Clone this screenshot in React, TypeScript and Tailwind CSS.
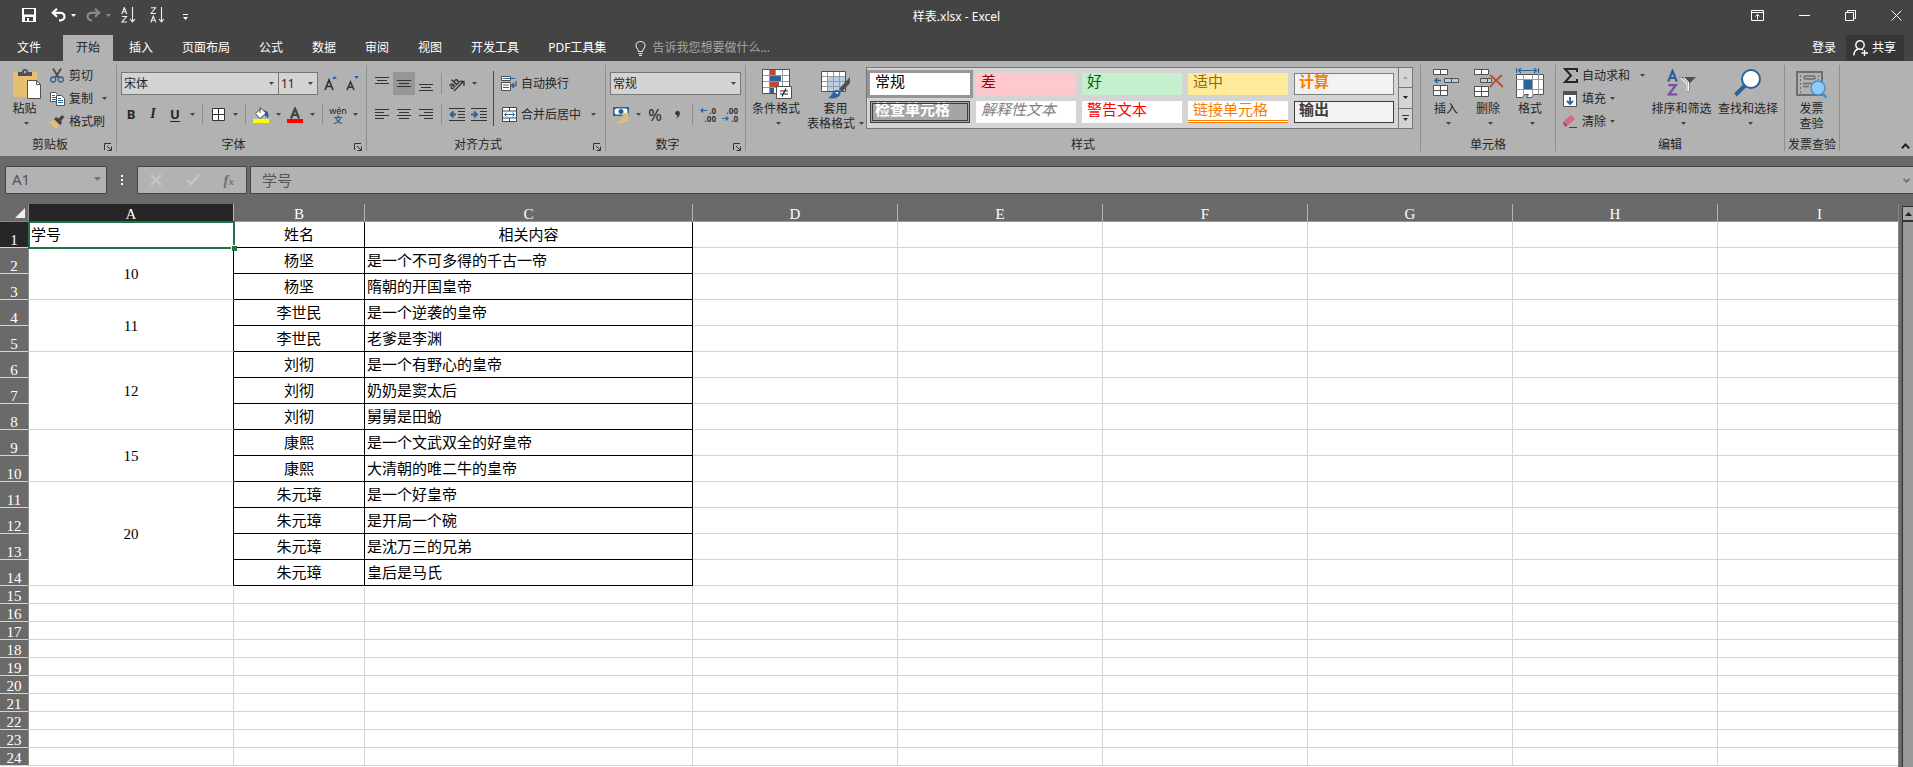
import React from 'react';

const TABS = ['开始', '插入', '页面布局', '公式', '数据', '审阅', '视图', '开发工具', 'PDF工具集'];

const COLUMNS = ['A', 'B', 'C', 'D', 'E', 'F', 'G', 'H', 'I'];

interface Emperor {
  id: number;
  entries: { name: string; note: string }[];
}

const EMPERORS: Emperor[] = [
  { id: 10, entries: [{ name: '杨坚', note: '是一个不可多得的千古一帝' }, { name: '杨坚', note: '隋朝的开国皇帝' }] },
  { id: 11, entries: [{ name: '李世民', note: '是一个逆袭的皇帝' }, { name: '李世民', note: '老爹是李渊' }] },
  {
    id: 12,
    entries: [
      { name: '刘彻', note: '是一个有野心的皇帝' },
      { name: '刘彻', note: '奶奶是窦太后' },
      { name: '刘彻', note: '舅舅是田蚡' },
    ],
  },
  { id: 15, entries: [{ name: '康熙', note: '是一个文武双全的好皇帝' }, { name: '康熙', note: '大清朝的唯二牛的皇帝' }] },
  {
    id: 20,
    entries: [
      { name: '朱元璋', note: '是一个好皇帝' },
      { name: '朱元璋', note: '是开局一个碗' },
      { name: '朱元璋', note: '是沈万三的兄弟' },
      { name: '朱元璋', note: '皇后是马氏' },
    ],
  },
];

const ROWS = EMPERORS.flatMap(e =>
  e.entries.map((entry, i) => ({ ...entry, id: e.id, span: i === 0 ? e.entries.length : 0 }))
);

const EMPTY_ROWS = Array.from({ length: 10 }, (_, i) => i + 15);

const STYLES = [
  { label: '常规', className: 'bg-white text-black outline-3 outline-[#969696]' },
  { label: '差', className: 'bg-[#ffc7ce] text-[#9c0006]' },
  { label: '好', className: 'bg-[#c6efce] text-[#006100]' },
  { label: '适中', className: 'bg-[#ffeb9c] text-[#9c6500]' },
  { label: '计算', className: 'bg-[#f2f2f2] font-bold text-[#fa7d00] outline-1 -outline-offset-1 outline-[#7f7f7f]' },
  { label: '检查单元格', className: 'bg-[#a5a5a5] font-bold text-white outline-3 -outline-offset-3 outline-double outline-[#3f3f3f]' },
  { label: '解释性文本', className: 'bg-white text-[#7f7f7f] italic' },
  { label: '警告文本', className: 'bg-white text-[#ff0000]' },
  { label: '链接单元格', className: 'bg-white text-[#fa7d00] border-b-3 border-double border-[#ff8001]' },
  { label: '输出', className: 'bg-[#f2f2f2] font-bold text-[#3f3f3f] outline-1 -outline-offset-1 outline-[#3f3f3f]' },
];

const Caret: React.FC<{ className?: string }> = ({ className = 'text-[#444]' }) => (
  <svg width="5" height="3" viewBox="0 0 5 3" className={`shrink-0 ${className}`}>
    <path d="M0 0h5L2.5 3z" fill="currentColor" />
  </svg>
);

const Tool: React.FC<{ label: string; active?: boolean; children: React.ReactNode }> = ({ label, active, children }) => (
  <button aria-label={label} className={`flex h-[23px] w-[22px] shrink-0 items-center justify-center ${active ? 'bg-[#969696]' : ''}`}>
    {children}
  </button>
);

const Drop: React.FC<{ label: string }> = ({ label }) => (
  <button aria-label={label} className="flex h-[23px] w-3 shrink-0 items-center justify-center">
    <Caret />
  </button>
);

const Divider = () => <div className="mx-1 h-[21px] w-px shrink-0 bg-[#8f8f8f]" />;

const Group: React.FC<{ title: string; launcher?: boolean; className?: string; children: React.ReactNode }> = ({
  title,
  launcher,
  className = '',
  children,
}) => (
  <>
    <section className={`flex shrink-0 flex-col ${className}`}>
      <div className="flex h-[74px]">{children}</div>
      <div className="flex h-5 items-center">
        <h2 className="flex-1 text-center whitespace-nowrap">{title}</h2>
        {launcher && (
          <button aria-label={`${title}设置`} className="flex h-5 w-4 items-center justify-center pt-1">
            <svg width="8" height="8" viewBox="0 0 8 8" fill="none" stroke="#333">
              <path d="M.5 7V.5H7M3 3l4 4M7.5 3.5v4h-4" />
            </svg>
          </button>
        )}
      </div>
    </section>
    <div className="mt-1 mb-[5px] w-px shrink-0 bg-[#8f8f8f]" />
  </>
);

const BigButton: React.FC<{ lines: string[]; className: string; drop?: 'below' | 'inline'; children: React.ReactNode }> = ({
  lines,
  className,
  drop,
  children,
}) => (
  <button className={`flex shrink-0 flex-col items-center pt-2 leading-[15px] ${className}`}>
    <span className="flex h-8 items-start">{children}</span>
    {lines.map((line, i) => (
      <span key={line} className="flex items-center gap-1 whitespace-nowrap">
        {line}
        {drop === 'inline' && i === lines.length - 1 && <Caret />}
      </span>
    ))}
    {drop === 'below' && (
      <span className="flex h-[15px] items-center pl-1">
        <Caret />
      </span>
    )}
  </button>
);

const SmallButton: React.FC<{ label: string; drop?: string; children: React.ReactNode }> = ({ label, drop, children }) => (
  <button className="flex h-[23px] items-center gap-1 whitespace-nowrap">
    <span className="flex w-4 justify-center">{children}</span>
    {label}
    {drop && <Caret className={`text-[#444] ${drop}`} />}
  </button>
);

const Lines: React.FC<{ d: string }> = ({ d }) => (
  <svg width="14" height="14" viewBox="0 0 14 14" stroke="#333" fill="none">
    <path d={d} />
  </svg>
);

const QuickAccess = () => (
  <div className="flex w-[640px] items-center pl-[22px] text-white">
    <button aria-label="保存" className="w-[29px]">
      <svg width="14" height="14" viewBox="0 0 14 14">
        <path d="M0 0h14v14H0z" fill="#fff" />
        <path d="M2 1h10v5.5H2zM3 9h8v4H7v-3H5v3H3z" fill="#444" />
      </svg>
    </button>
    <button aria-label="撤消" className="w-5">
      <svg width="15" height="14" viewBox="0 0 15 14" fill="none" stroke="#fff" strokeWidth="2.2">
        <path d="M6 .8L1.8 4.8 6 8.8M2 4.8h7.5a4 3.8 0 0 1 0 7.6H8" />
      </svg>
    </button>
    <button aria-label="撤消列表" className="w-[15px]"><Caret className="text-white" /></button>
    <button aria-label="恢复" className="w-5">
      <svg width="15" height="14" viewBox="0 0 15 14" fill="none" stroke="#8a8a8a" strokeWidth="2.2">
        <path d="M9 .8l4.2 4L9 8.8M13 4.8H5.5a4 3.8 0 0 0 0 7.6H6" />
      </svg>
    </button>
    <button aria-label="恢复列表" className="w-[15px]"><Caret className="text-[#8a8a8a]" /></button>
    <button aria-label="升序" className="w-[29px]">
      <svg width="15" height="16" viewBox="0 0 15 16" fill="none" stroke="#eee" strokeWidth="1.1">
        <path d="M.8 7L3.3.5 5.8 7M1.6 4.8H5M1 9.5h4.5L1 15h5M11.5 0v14.5M9 12l2.5 2.8L14 12" />
      </svg>
    </button>
    <button aria-label="降序" className="w-[33px]">
      <svg width="15" height="16" viewBox="0 0 15 16" fill="none" stroke="#eee" strokeWidth="1.1">
        <path d="M1 .8h4.5L1 6.5h5M.8 15.5L3.3 9l2.5 6.5M1.6 13.3H5M11.5 0v14.5M9 12l2.5 2.8L14 12" />
      </svg>
    </button>
    <button aria-label="自定义快速访问工具栏" className="pt-1">
      <svg width="5" height="6" viewBox="0 0 5 6" fill="#fff">
        <path d="M0 0h5v1H0zM0 3h5L2.5 6z" />
      </svg>
    </button>
  </div>
);

const TitleBar = () => (
  <header className="flex h-[35px] shrink-0 items-stretch justify-between pb-[5px] text-white">
    <QuickAccess />
    <h1 className="self-center pt-1">样表.xlsx - Excel</h1>
    <div className="flex w-[640px] items-center justify-end gap-[35px] pr-[11px]">
      <button aria-label="功能区显示选项">
        <svg width="13" height="11" viewBox="0 0 13 11" fill="none" stroke="#fff">
          <path d="M.5.5h12v10H.5zM.5 2.5h12M6.5 9.5V4.5M4.3 6.5l2.2-2.2 2.2 2.2" />
        </svg>
      </button>
      <button aria-label="最小化">
        <svg width="11" height="11" viewBox="0 0 11 11" stroke="#fff"><path d="M0 5.5h11" /></svg>
      </button>
      <button aria-label="还原">
        <svg width="11" height="11" viewBox="0 0 11 11" fill="none" stroke="#fff"><path d="M.5 2.5h8v8h-8zM2.5 2.5v-2h8v8h-2" /></svg>
      </button>
      <button aria-label="关闭">
        <svg width="11" height="11" viewBox="0 0 11 11" stroke="#fff"><path d="M.5.5l10 10M10.5.5l-10 10" /></svg>
      </button>
    </div>
  </header>
);

const TabStrip = () => (
  <nav className="flex h-[26px] shrink-0 items-stretch text-white">
    <button className="w-[63px] pb-px pl-[17px] text-left">文件</button>
    <div className="flex gap-[3px]">
      {TABS.map(tab => (
        <button key={tab} className={`px-[13px] pb-px whitespace-nowrap ${tab === '开始' ? 'bg-[#b2b2b2] text-[#262626]' : ''}`}>
          {tab}
        </button>
      ))}
    </div>
    <label className="ml-4 flex items-center gap-[6px]">
      <svg width="11" height="15" viewBox="0 0 11 15" fill="none" stroke="#ddd" strokeWidth="1.1">
        <path d="M3.5 10.5C3.5 8 1 7.5 1 4.8a4.5 4.3 0 0 1 9 0c0 2.7-2.5 3.2-2.5 5.7zM3.5 12.5h4M4 14.4h3" />
      </svg>
      <input className="w-40 bg-transparent outline-none placeholder:text-[#a6a6a6]" placeholder="告诉我您想要做什么..." aria-label="告诉我您想要做什么" />
    </label>
    <div className="ml-auto flex pr-[9px]">
      <button className="px-[10px] pb-px">登录</button>
      <button className="flex w-[58px] items-center gap-1 bg-[#363636] pb-px pl-[7px] whitespace-nowrap">
        <svg width="15" height="16" viewBox="0 0 15 16" fill="none" stroke="#fff" strokeWidth="1.4">
          <circle cx="7" cy="5" r="4.2" />
          <path d="M.8 15.5c.3-3.5 2-6 4.5-6.5M8.5 9l1.5 1M11.5 10v6M8.5 13H15" />
        </svg>
        共享
      </button>
    </div>
  </nav>
);

const ClipboardGroup = () => (
  <Group title="剪贴板" launcher className="w-[116px]">
    <BigButton lines={['粘贴']} drop="below" className="w-[49px]">
      <svg width="28" height="30" viewBox="0 0 28 30" className="ml-1">
        <path d="M0 3h24v25H0z" fill="#e6c070" />
        <path d="M5 7V3h4a3 3 0 0 1 6 0h4v4z" fill="#505050" />
        <circle cx="12" cy="3" r="1.2" fill="#b2b2b2" />
        <path d="M14.5 11.5h9l4 4v14h-13z" fill="#fff" stroke="#505050" />
        <path d="M23.5 11.5v4h4" fill="none" stroke="#505050" />
      </svg>
    </BigButton>
    <div className="flex flex-col pt-[3px]">
      <SmallButton label="剪切">
        <svg width="14" height="15" viewBox="0 0 14 15" fill="none">
          <path d="M3 .5l5.5 9M11 .5l-5.5 9" stroke="#505050" strokeWidth="2" />
          <circle cx="3.2" cy="11.5" r="2.5" stroke="#2b6299" strokeWidth="1.3" />
          <circle cx="10.8" cy="11.5" r="2.5" stroke="#2b6299" strokeWidth="1.3" />
        </svg>
      </SmallButton>
      <SmallButton label="复制" drop="ml-[5px]">
        <svg width="15" height="14" viewBox="0 0 15 14">
          <path d="M.5.5h5l2 2v7h-7z" fill="#fff" stroke="#505050" />
          <path d="M2 3.5h3M2 5.5h4M2 7.5h4" stroke="#2b6299" />
          <path d="M6.5 3.5h5l3 3v7h-8z" fill="#fff" stroke="#505050" />
          <path d="M8 6.5h3M8 8.5h5M8 10.5h5" stroke="#2b6299" />
        </svg>
      </SmallButton>
      <SmallButton label="格式刷">
        <svg width="16" height="14" viewBox="0 0 16 14">
          <path d="M0 7l5-2 5 5-3 4z" fill="#e6c070" />
          <path d="M5 4l2-2 2.5 1.5L13 0l2.5 2L12 6l1 2-2 2z" fill="#444" />
        </svg>
      </SmallButton>
    </div>
  </Group>
);

const SelectBox: React.FC<{ label: string; value: string; className: string }> = ({ label, value, className }) => (
  <div className={`relative h-[23px] shrink-0 border border-[#777] bg-[#d4d4d4] ${className}`}>
    <select aria-label={label} className="h-full w-full appearance-none bg-transparent pl-[2px] text-[12px] text-[#262626] outline-none">
      <option>{value}</option>
    </select>
    <span className="pointer-events-none absolute inset-y-0 right-1 flex items-center">
      <Caret />
    </span>
  </div>
);

const FontGroup = () => (
  <Group title="字体" launcher className="w-[249px]">
    <div className="flex flex-col gap-2 pt-[11px] pl-[3px]">
      <div className="flex">
        <SelectBox label="字体" value="宋体" className="ml-px w-[158px]" />
        <SelectBox label="字号" value="11" className="-ml-px w-10" />
        <Tool label="增大字号">
          <svg width="14" height="15" viewBox="0 0 14 15" className="ml-1 shrink-0">
            <path d="M1 14L5 4l4 10M2.5 10.5h5" stroke="#333" strokeWidth="1.7" fill="none" />
            <path d="M8 3l2.500-3L13 3z" fill="#2b6299" />
          </svg>
        </Tool>
        <Tool label="减小字号">
          <svg width="14" height="15" viewBox="0 0 14 15" className="ml-1 shrink-0">
            <path d="M1 14l3.5-8L8 14M2.5 11.2h4" stroke="#333" strokeWidth="1.6" fill="none" />
            <path d="M8 0h5l-2.5 3z" fill="#2b6299" />
          </svg>
        </Tool>
      </div>
      <div className="flex items-center text-[13px] leading-[14px] text-[#262626]">
        <Tool label="加粗"><b className="pb-[2px]">B</b></Tool>
        <Tool label="倾斜"><b className="pb-[2px] font-[family-name:'Liberation_Serif',serif] text-[14px] italic">I</b></Tool>
        <Tool label="下划线"><b className="pb-[2px] underline underline-offset-2">U</b></Tool>
        <Drop label="下划线类型" />
        <Divider />
        <Tool label="边框">
          <svg width="13" height="13" viewBox="0 0 13 13">
            <path d="M.5.5h12v12H.5zM6.5 0v13M0 6.5h13" fill="#fff" stroke="#333" />
          </svg>
        </Tool>
        <Drop label="边框类型" />
        <Divider />
        <Tool label="填充颜色">
          <svg width="16" height="16" viewBox="0 0 16 16">
            <path d="M11 3.5c3.500 0 5.500 2 4 8-1-2-3-3-5-4z" fill="#2b6299" />
            <path d="M2.5 6.5L8 1.5l5 4.5-6 5.5z" fill="#fff" stroke="#505050" />
            <path d="M7 6V1.5Q7 .5 8 .5" fill="none" stroke="#505050" />
            <path d="M0 12h16v4H0z" fill="#ff0" />
          </svg>
        </Tool>
        <Drop label="填充颜色列表" />
        <Tool label="字体颜色">
          <svg width="16" height="16" viewBox="0 0 16 16">
            <path d="M4 11.5L8 1.500l4 10M5.500 8h5" fill="none" stroke="#444" strokeWidth="2.2" />
            <path d="M0 12h16v4H0z" fill="#f00" />
          </svg>
        </Tool>
        <Drop label="字体颜色列表" />
        <Divider />
        <Tool label="拼音">
          <span className="flex flex-col items-center text-[9px] leading-[9px]">
            <span>wén</span>
            <span className="font-bold text-[#2b6299]">文</span>
          </span>
        </Tool>
        <Drop label="拼音选项" />
      </div>
    </div>
  </Group>
);

const AlignGroup = () => (
  <Group title="对齐方式" launcher className="w-[238px]">
    <div className="flex flex-col gap-2 pt-[11px] pl-1">
      <div className="flex items-center">
        <Tool label="顶端对齐"><Lines d="M0 .5h14M2 3.5h10M0 6.5h14" /></Tool>
        <Tool label="垂直居中" active><Lines d="M0 3.5h14M2 6.5h10M0 9.5h14" /></Tool>
        <Tool label="底端对齐"><Lines d="M0 7.5h14M2 10.5h10M0 13.5h14" /></Tool>
        <Divider />
        <Tool label="方向">
          <svg width="18" height="17" viewBox="0 0 18 17" fill="none" stroke="#333" strokeWidth="1.3" className="overflow-visible">
            <text x="0" y="12" fontSize="10" fontWeight="bold" fill="#333" stroke="none" transform="rotate(-45 6 9)">ab</text>
            <path d="M6 16l9-9M11.500 6.500H16V11" />
          </svg>
        </Tool>
        <Drop label="方向选项" />
      </div>
      <div className="flex items-center">
        <Tool label="左对齐"><Lines d="M0 1.5h14M0 4.5h9M0 7.5h14M0 10.5h9" /></Tool>
        <Tool label="居中"><Lines d="M0 1.5h14M2 4.5h10M0 7.5h14M2 10.5h10" /></Tool>
        <Tool label="右对齐"><Lines d="M0 1.5h14M5 4.5h9M0 7.5h14M5 10.5h9" /></Tool>
        <Divider />
        <Tool label="减少缩进量">
          <svg width="16" height="14" viewBox="0 0 16 14" fill="none">
            <path d="M0 .5h16M9 3.5h7M9 6.5h7M9 9.5h7M0 12.5h16" stroke="#333" />
            <path d="M7 6.5H2M4.500 3.5l-3 3 3 3" stroke="#2b6299" strokeWidth="1.8" />
          </svg>
        </Tool>
        <Tool label="增加缩进量">
          <svg width="16" height="14" viewBox="0 0 16 14" fill="none">
            <path d="M0 .5h16M9 3.5h7M9 6.5h7M9 9.5h7M0 12.5h16" stroke="#333" />
            <path d="M0 6.5h5M3 3.5l3 3-3 3" stroke="#2b6299" strokeWidth="1.8" />
          </svg>
        </Tool>
      </div>
    </div>
    <div className="mt-[10px] mr-[7px] ml-auto h-[55px] w-px bg-[#444]" />
    <div className="flex w-[104px] flex-col gap-2 pt-[11px]">
      <SmallButton label="自动换行">
        <svg width="16" height="15" viewBox="0 0 16 15">
          <path d="M.5.5h9v4h-9zM.5 6.5h9v8h-9z" fill="#fff" stroke="#505050" />
          <path d="M2 2.5h12M2 9h6M2 11.5h6" stroke="#2b6299" />
          <path d="M15 5v4.5h-4M13 7l-2.5 2.5L13 12" fill="none" stroke="#2b6299" strokeWidth="1.3" />
        </svg>
      </SmallButton>
      <SmallButton label="合并后居中" drop="ml-[6px]">
        <svg width="15" height="15" viewBox="0 0 15 15">
          <path d="M.5.5h14v14H.5zM.5 4h14M.5 11h14M7.5.5V4M7.5 11v3.5" fill="#fff" stroke="#444" />
          <path d="M3 7.5h9M4.5 5.5l-2 2 2 2M10.5 5.5l2 2-2 2" fill="none" stroke="#2b6299" />
        </svg>
      </SmallButton>
    </div>
  </Group>
);

const DecimalArrow: React.FC<{ d: string }> = ({ d }) => (
  <svg width="7" height="5" viewBox="0 0 7 5" fill="none" stroke="#2b6299" strokeWidth="1.2">
    <path d={d} />
  </svg>
);

const NumberGroup = () => (
  <Group title="数字" launcher className="w-[139px]">
    <div className="flex flex-col gap-2 pt-[11px] pl-1">
      <SelectBox label="数字格式" value="常规" className="w-[131px]" />
      <div className="flex items-center">
        <Tool label="会计数字格式">
          <svg width="16" height="16" viewBox="0 0 16 16">
            <path d="M0 0h16v9H0z" fill="#2b6299" />
            <path d="M3 1.5h10l1.500 1.500v3L13 7.500H3L1.500 6V3z" fill="#fff" />
            <circle cx="8" cy="4.5" r="2.5" fill="#2b6299" />
            <ellipse cx="12.5" cy="7.5" rx="3.5" ry="1.8" fill="#e6c070" />
            <path d="M9 10.5h7M8 13h7M4 15.2h6" stroke="#e6c070" strokeWidth="1.8" />
          </svg>
        </Tool>
        <Drop label="货币列表" />
        <Tool label="百分比样式"><span className="text-[16px] font-medium text-[#333]">%</span></Tool>
        <Tool label="千位分隔样式">
          <svg width="5" height="8" viewBox="0 0 5 8"><path d="M2.3 0a2.2 2.2 0 0 1 2.500 2.3C4.8 5 3 7 .8 7.5 2 6.5 2.5 5.5 2.5 4.4A2.2 2.2 0 0 1 2.3 0z" fill="#333" /></svg>
        </Tool>
        <Divider />
        <Tool label="增加小数位数">
          <span className="flex w-4 flex-col items-end text-[8px] leading-2 font-bold text-[#333]">
            <span className="flex w-full items-center justify-between">
              <DecimalArrow d="M7 2.5H1M3 .5l-2 2 2 2" />
              .0
            </span>
            <span>.00</span>
          </span>
        </Tool>
        <Tool label="减少小数位数">
          <span className="flex w-4 flex-col items-end text-[8px] leading-2 font-bold text-[#333]">
            <span>.00</span>
            <span className="flex w-full items-center justify-between">
              <DecimalArrow d="M0 2.5h6M4 .5l2 2-2 2" />
              .0
            </span>
          </span>
        </Tool>
      </div>
    </div>
  </Group>
);

const StylesGroup = () => (
  <Group title="样式" className="w-[674px]">
    <BigButton lines={['条件格式']} drop="below" className="w-[60px]">
      <svg width="30" height="30" viewBox="0 0 30 30" className="ml-[2px]">
        <path d="M.5.5h27v24H.5z" fill="#fff" />
        <path d="M8 1h5v5H8zM8 13h9v5H8z" fill="#c0492b" />
        <path d="M8 7h11v5H8zM8 19h4v5H8z" fill="#2b6299" />
        <path d="M7.5.5v24M13.5.5v6M20.5.5v17M.5 6.5h27M.5 12.5h27M.5 18.5h14" stroke="#999" />
        <path d="M.5.5h27v24H.5z" fill="none" stroke="#505050" />
        <path d="M14.5 17.5h15v12h-15z" fill="#fff" stroke="#505050" />
        <path d="M18 22h8M18 25h8M24 19.5l-4 8" stroke="#222" strokeWidth="1.2" />
      </svg>
    </BigButton>
    <BigButton lines={['套用', '表格格式']} drop="inline" className="w-[59px]">
      <svg width="30" height="30" viewBox="0 0 30 30">
        <path d="M.5 2.5h24v20H.5z" fill="#fff" />
        <path d="M7 8h18v15H7z" fill="#b9cfe8" />
        <path d="M6.5 2.5v20M12.5 2.5v20M18.5 2.5v20M.5 7.5h24M.5 12.5h24M.5 17.5h24" stroke="#999" />
        <path d="M.5 2.5h24v20H.5z" fill="none" stroke="#505050" />
        <path d="M29 8v6l-8 9-3-3z" fill="#505050" />
        <path d="M7 29c4-1 4-8 9-8 3 0 4 3 3 5-2 3-6 4-12 3z" fill="#2b6299" />
        <path d="M14 24c2-2 4-1 3 1z" fill="#fff" />
      </svg>
    </BigButton>
    <div className="mt-[6px] ml-px flex h-[62px] border border-[#777] bg-[#d4d4d4]">
      <div className="grid w-[531px] grid-cols-5 content-start gap-[6px] py-[5px] pr-1 pl-[3px] font-[family-name:'Liberation_Serif','Noto_Sans_CJK_SC',serif] text-[15px] leading-[19px]">
        {STYLES.map(style => (
          <button key={style.label} className={`flex h-[22px] items-start pl-[5px] whitespace-nowrap ${style.className}`}>
            {style.label}
          </button>
        ))}
      </div>
      <div className="flex w-[14px] flex-col divide-y divide-[#777] border-l border-[#777] bg-[#d4d4d4]">
        <button aria-label="上一行" className="flex flex-1 items-center justify-center"><Caret className="rotate-180 text-[#a0a0a0]" /></button>
        <button aria-label="下一行" className="flex flex-1 items-center justify-center"><Caret className="text-[#222]" /></button>
        <button aria-label="其他" className="flex flex-1 items-center justify-center">
          <svg width="7" height="7" viewBox="0 0 7 7" fill="#333"><path d="M0 0h7v1H0zM1 3h5L3.5 6z" /></svg>
        </button>
      </div>
    </div>
  </Group>
);

const CellsGroup = () => (
  <Group title="单元格" className="w-[134px]">
    <BigButton lines={['插入']} drop="below" className="ml-1 w-[42px]">
      <svg width="28" height="29" viewBox="0 0 28 29" stroke="#505050" fill="#fff">
        <path d="M1.5.5h14v5h-14zM8.5.5v5M1.5 16.5h14v10h-14zM8.5 16.5v10M1.5 21.5h14" />
        <path d="M12.5 9.5h14v4h-14zM19.5 9.5v4" fill="#b9cfe8" />
        <path d="M9 11.5H3M5.5 9L3 11.5 5.5 14" fill="none" stroke="#2b6299" strokeWidth="1.5" />
      </svg>
    </BigButton>
    <BigButton lines={['删除']} drop="below" className="w-[42px]">
      <svg width="29" height="29" viewBox="0 0 29 29" stroke="#505050" fill="#fff">
        <path d="M.5.5h14v5H.5zM7.5.5v5M.5 17.5h14v10H.5zM7.5 17.5v10M.5 22.5h14" />
        <path d="M6.5 9.5h11v4h-11zM13.5 9.5v4" fill="#b9cfe8" />
        <path d="M16 6c5 4 9 8 13 12M28 6c-5 4-9 8-12 12" fill="none" stroke="#c0492b" strokeWidth="1.8" />
      </svg>
    </BigButton>
    <BigButton lines={['格式']} drop="below" className="w-[42px]">
      <svg width="28" height="31" viewBox="0 0 28 31" className="-mt-px" fill="none">
        <path d="M.5 0v5M22.5 0v5M2 2.5h19M5 0L2.5 2.5 5 5M18 0l2.5 2.5L18 5" stroke="#2b6299" strokeWidth="1.2" />
        <path d="M.5 6.5h27v20h-10l-2 3h-5l2-3h-4l-2 3h-6z" fill="#fff" stroke="#505050" />
        <path d="M7.5 6.5v20M16.5 6.5v20M22.5 6.5v20M.5 11.5h27M.5 21.5h27" stroke="#999" />
        <path d="M8 12h8v9H8z" fill="#2b6299" />
      </svg>
    </BigButton>
  </Group>
);

const EditGroup = () => (
  <Group title="编辑" className="w-[228px]">
    <div className="flex w-[92px] flex-col items-start pt-[3px] pl-[6px]">
      <SmallButton label="自动求和" drop="ml-[6px]">
        <svg width="15" height="15" viewBox="0 0 15 15" fill="none" stroke="#262626" strokeWidth="2">
          <path d="M14 4V1H2l6 6.5L2 14h12v-3" />
        </svg>
      </SmallButton>
      <SmallButton label="填充" drop="ml-0">
        <svg width="14" height="16" viewBox="0 0 14 16">
          <path d="M.5.5h13v15H.5z" fill="#fff" stroke="#505050" />
          <path d="M0 0h14v4H0z" fill="#505050" />
          <path d="M7 6v7M4 10l3 3 3-3" fill="none" stroke="#2b6299" strokeWidth="1.8" />
        </svg>
      </SmallButton>
      <SmallButton label="清除" drop="ml-0">
        <svg width="14" height="13" viewBox="0 0 14 13">
          <path d="M8 0l4 4-7 6-4-4z" fill="#d9697f" />
          <path d="M1 6.5L0 9l2.5 3L5 10z" fill="#b04a60" />
          <path d="M6 12.5h8" stroke="#444" />
        </svg>
      </SmallButton>
    </div>
    <BigButton lines={['排序和筛选']} drop="below" className="w-[67px]">
      <svg width="30" height="28" viewBox="0 0 30 28" fill="none">
        <path d="M1.2 12.5L5.500 2l4.300 10.500M2.800 9h5.500" stroke="#2b6299" strokeWidth="2.2" />
        <path d="M1.5 16.2h7.300L1.800 25.500h8.500" stroke="#7c4aa0" strokeWidth="2.2" />
        <path d="M12 8h17l-6.5 6.5V22l-3 1v-8.500z" fill="#505050" />
        <path d="M13.5 8.500l6.500 6V22.500M16.500 8.500l5 5V22" stroke="#fff" strokeWidth="1.200" />
      </svg>
    </BigButton>
    <BigButton lines={['查找和选择']} drop="below" className="w-[66px]">
      <svg width="28" height="28" viewBox="0 0 28 28">
        <path d="M1.5 26L11 16.5" stroke="#2b6299" strokeWidth="4" />
        <circle cx="17" cy="10" r="9" fill="#fff" stroke="#2b6299" strokeWidth="2" />
      </svg>
    </BigButton>
  </Group>
);

const InvoiceGroup = () => (
  <Group title="发票查验" className="w-[54px]">
    <BigButton lines={['发票', '查验']} className="w-[53px]">
      <svg width="31" height="28" viewBox="0 0 31 28" fill="none" className="mt-[2px]">
        <path d="M1 1h25v23H1z" stroke="#6e6e6a" strokeWidth="2" />
        <path d="M4.5 4v18M22.5 4v5" stroke="#6e6e6a" strokeDasharray="2 2" />
        <rect x="8" y="5" width="11" height="3" rx="1.5" stroke="#6e6e6a" strokeWidth="1.5" />
        <path d="M7 12.5h9M7 15.5h6" stroke="#6e6e6a" strokeWidth="1.5" />
        <circle cx="22" cy="17" r="7" fill="#90caf9" stroke="#4a90c2" strokeWidth="1.5" />
        <path d="M26.5 22.5l4 4" stroke="#4a90c2" strokeWidth="2.5" />
      </svg>
    </BigButton>
  </Group>
);

const Ribbon = () => (
  <div className="flex h-[95px] shrink-0 overflow-hidden bg-[#b2b2b2] text-[#262626]">
    <ClipboardGroup />
    <FontGroup />
    <AlignGroup />
    <NumberGroup />
    <StylesGroup />
    <CellsGroup />
    <EditGroup />
    <InvoiceGroup />
    <button aria-label="折叠功能区" className="mt-auto ml-auto pr-[3px] pb-[7px]">
      <svg width="9" height="6" viewBox="0 0 9 6" fill="none" stroke="#222" strokeWidth="2"><path d="M.8 5.2L4.5 1.5l3.7 3.7" /></svg>
    </button>
  </div>
);

const FormulaBar = () => (
  <div className="flex h-12 shrink-0 items-start bg-[#6a6a6a] pt-[10px] pl-[5px] text-[#555]">
    <div className="relative h-7 w-[102px] border border-[#444] bg-[#b2b2b2]">
      <input aria-label="名称框" defaultValue="A1" className="h-full w-full bg-transparent pb-[2px] pl-[6px] text-[15px] outline-none" />
      <svg width="7" height="4" viewBox="0 0 7 4" className="absolute top-[10px] right-[5px]"><path d="M0 0h7L3.5 4z" fill="#777" /></svg>
    </div>
    <svg width="30" height="28" viewBox="0 0 30 28" fill="#fff"><path d="M14 9h2v2h-2zM14 13h2v2h-2zM14 17h2v2h-2z" /></svg>
    <div className="flex h-7 w-[110px] items-center justify-between border border-[#444] bg-[#b2b2b2] px-3">
      <button aria-label="取消"><svg width="12" height="12" viewBox="0 0 12 12" stroke="#c6c6c6" strokeWidth="2"><path d="M1 1l10 10M11 1L1 11" /></svg></button>
      <button aria-label="输入"><svg width="14" height="12" viewBox="0 0 14 12" fill="none" stroke="#c6c6c6" strokeWidth="2.5"><path d="M1 6l4 4 8-9" /></svg></button>
      <button aria-label="插入函数" className="font-[family-name:'Liberation_Serif',serif] text-[15px] leading-4 font-bold text-[#707070] italic">
        f<span className="text-[11px]">x</span>
      </button>
    </div>
    <div className="ml-[3px] flex h-7 flex-1 items-center border border-r-0 border-[#444] bg-[#b2b2b2] pr-[3px]">
      <input aria-label="编辑栏" defaultValue="学号" className="h-full flex-1 bg-transparent pb-[2px] pl-[11px] text-[15px] outline-none" />
      <button aria-label="展开编辑栏">
        <svg width="7" height="5" viewBox="0 0 7 5" fill="none" stroke="#777" strokeWidth="2"><path d="M.5.8l3 3 3-3" /></svg>
      </button>
    </div>
  </div>
);

const rowHead = 'border-r border-b border-r-[#8a8a8a] border-b-[#d4d4d4] p-0 align-bottom font-normal leading-[14px] text-white';
const gridCell = 'border-r border-b border-[#d4d4d4] p-0';
const boxCell = 'border-r border-b border-black pt-[2px]';

const Sheet = () => (
  <div className="flex min-h-0 flex-1 overflow-hidden bg-[#6a6a6a]">
    <div className="min-w-0 flex-1 overflow-hidden border-r border-[#888] bg-white">
      {/* last column runs on under the scroll bar */}
      <table className="w-[calc(100%+24px)] table-fixed border-separate border-spacing-0 bg-white text-[15px] leading-[17px] text-black font-[family-name:'Liberation_Serif','Noto_Sans_CJK_SC',serif]">
        <colgroup>
          <col className="w-[29px]" />
          <col className="w-[205px]" />
          <col className="w-[131px]" />
          <col className="w-[328px]" />
          <col className="w-[205px]" />
          <col className="w-[205px]" />
          <col className="w-[205px]" />
          <col className="w-[205px]" />
          <col className="w-[205px]" />
          <col />
        </colgroup>
        <thead>
          <tr className="h-[18px] bg-[#6a6a6a] text-white">
            <td className="border-r border-b border-r-[#8a8a8a] border-b-[#8a8a8a] p-0 pr-[3px]">
              <svg width="10" height="10" viewBox="0 0 10 10" className="ml-auto"><path d="M10 0v10H0z" fill="#eee" /></svg>
            </td>
            {COLUMNS.map(col => (
              <th
                key={col}
                scope="col"
                className={`border-r border-b border-r-[#b4b4b4] border-b-[#999] p-0 align-bottom leading-[13px] font-normal ${col === 'A' ? 'bg-[#262626]' : ''}`}
              >
                {col}
              </th>
            ))}
          </tr>
        </thead>
        <tbody>
          <tr className="h-[26px]">
            <th scope="row" className={`bg-[#262626] ${rowHead}`}>1</th>
            <td className="relative border-r border-b border-black pt-[2px] pl-[2px]">
              学号
              {/* active cell frame and fill handle */}
              <div className="absolute -top-px -right-[2px] -bottom-[2px] -left-px z-10 border-2 border-[#217346]">
                <div className="absolute -right-[4px] -bottom-[4px] size-[6px] border-t border-l border-white bg-[#217346]" />
              </div>
            </td>
            <td className={`text-center ${boxCell}`}>姓名</td>
            <td className={`text-center ${boxCell}`}>相关内容</td>
            {COLUMNS.slice(3).map(col => <td key={col} className={gridCell} />)}
          </tr>
          {ROWS.map((row, i) => (
            <tr key={i} className="h-[26px]">
              <th scope="row" className={`bg-[#6a6a6a] ${rowHead}`}>{i + 2}</th>
              {row.span > 0 && (
                <td rowSpan={row.span} className="border-r border-b border-r-black border-b-[#d4d4d4] pt-[2px] text-center">{row.id}</td>
              )}
              <td className={`text-center ${boxCell}`}>{row.name}</td>
              <td className={`pl-[2px] ${boxCell}`}>{row.note}</td>
              {COLUMNS.slice(3).map(col => <td key={col} className={gridCell} />)}
            </tr>
          ))}
          {EMPTY_ROWS.map(n => (
            <tr key={n} className="h-[18px]">
              <th scope="row" className={`bg-[#6a6a6a] ${rowHead}`}>{n}</th>
              {COLUMNS.map(col => <td key={col} className={gridCell} />)}
            </tr>
          ))}
        </tbody>
      </table>
    </div>
    <div className="mt-[2px] ml-[3px] flex w-[11px] flex-col border-t border-l border-[#333] bg-[#999]">
      <button aria-label="向上滚动" className="flex h-[15px] items-center justify-center border-b-2 border-[#333] bg-[#a6a6a6]">
        <svg width="7" height="4" viewBox="0 0 7 4"><path d="M0 4h7L3.5 0z" fill="#222" /></svg>
      </button>
    </div>
  </div>
);

const App = () => (
  <div className="flex h-screen flex-col overflow-hidden bg-[#444] font-[family-name:'Noto_Sans','Noto_Sans_CJK_SC',sans-serif] text-[12px] leading-4">
    <TitleBar />
    <TabStrip />
    <Ribbon />
    <FormulaBar />
    <Sheet />
  </div>
);

export default App;
